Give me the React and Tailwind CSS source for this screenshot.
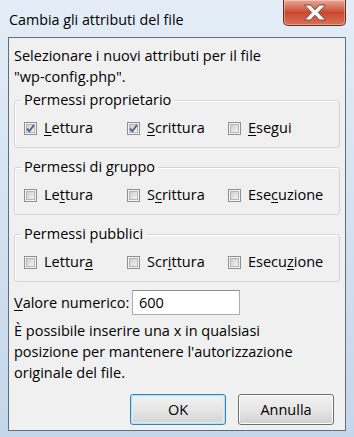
const F = { fontFamily: '"Open Sans", "Noto Sans", sans-serif' };

function Box({ checked }) {
  return (
    <svg width="13" height="13" viewBox="0 0 13 13" className="shrink-0">
      <defs>
        <linearGradient id="cbg" x1="0" y1="0" x2="1" y2="1">
          <stop offset="0" stopColor="#cbcbcb" />
          <stop offset="1" stopColor="#f7f7f7" />
        </linearGradient>
      </defs>
      <rect x="0.5" y="0.5" width="12" height="12" fill="#f4f4f4" stroke="#8f8f8f" />
      <rect x="2.5" y="2.5" width="8" height="8" fill="url(#cbg)" stroke="#b4b4b4" />
      {checked && (
        <path d="M3 6.5 L5.3 9.2 L10 3" fill="none" stroke="#4a5f97" strokeWidth="1.9" strokeLinejoin="round" />
      )}
    </svg>
  );
}

function Check({ checked, pre, u, post, w }) {
  return (
    <div className={`flex items-center gap-[7px] ${w}`}>
      <Box checked={checked} />
      <span>
        {pre}
        <span className="underline underline-offset-2">{u}</span>
        {post}
      </span>
    </div>
  );
}

function Group({ title, items, className }) {
  return (
    <fieldset className={`mx-[5px] border border-[#d5d5d5] rounded-[3px] pl-[6px] pb-[7px] shadow-[inset_1px_1px_0_#fff] ${className}`}>
      <legend className="px-[3px] leading-[20px]">{title}</legend>
      <div className="flex pl-[3px] h-[24px] mt-[6px] items-center">
        {items.map((it, i) => (
          <Check key={i} {...it} w={i === 0 ? "w-[103px]" : "w-[101px]"} />
        ))}
      </div>
    </fieldset>
  );
}

export default function App() {
  return (
    <div
      className="w-[354px] h-[437px] bg-gradient-to-b from-[#e4edf7] via-[#d3e1f0] to-[#c4d6ea] text-[14.5px] text-black flex flex-col"
      style={F}
    >
      <div className="h-[37px] flex justify-between items-start">
        <div className="pl-[9px] pt-[9px] text-[14.3px] leading-[22px]">Cambia gli attributi del file</div>
        <div className="mr-[8px] w-[63px] h-[26px] rounded-b-[5px] border border-t-0 border-[#6b2a1e] bg-gradient-to-b from-[#eaa897] via-[#c9472d] to-[#d77258] flex items-center justify-center shadow-[inset_0_0_0_1px_rgba(255,255,255,0.35)]">
          <svg width="24" height="17" viewBox="0 0 24 17">
            <path d="M1.5 1 H7.5 L12 5.8 L16.5 1 H22.5 L15.3 8.5 L22.5 16 H16.5 L12 11.2 L7.5 16 H1.5 L8.7 8.5 Z" fill="#fff" stroke="#6e4a44" strokeWidth="1" strokeLinejoin="round" />
          </svg>
        </div>
      </div>
      <div className="mx-[8px] h-[394px] border border-[#5e6f80] bg-[#f0f0f0] flex flex-col">
        <div className="px-[5px] pt-[7px] leading-[21px]">
          Selezionare i nuovi attributi per il file
          <br />
          "wp-config.php".
        </div>
        <Group
          className="mt-[3px]"
          title="Permessi proprietario"
          items={[
            { checked: true, pre: "", u: "L", post: "ettura" },
            { checked: true, pre: "", u: "S", post: "crittura" },
            { checked: false, pre: "", u: "E", post: "segui" },
          ]}
        />
        <Group
          className="mt-[9px]"
          title="Permessi di gruppo"
          items={[
            { pre: "Le", u: "t", post: "tura" },
            { pre: "S", u: "c", post: "rittura" },
            { pre: "Ese", u: "c", post: "uzione" },
          ]}
        />
        <Group
          className="mt-[9px]"
          title="Permessi pubblici"
          items={[
            { pre: "Lettur", u: "a", post: "" },
            { pre: "Scr", u: "i", post: "ttura" },
            { pre: "Esecu", u: "z", post: "ione" },
          ]}
        />
        <div className="flex items-center mt-[8px] pl-[5px]">
          <span className="w-[118px]">
            <span className="underline underline-offset-2">V</span>alore numerico:
          </span>
          <div className="w-[108px] h-[25px] bg-white border border-[#abadb3] border-t-[#8e8f8f] pl-[6px] flex items-center">600</div>
        </div>
        <div className="px-[5px] pt-[5px] leading-[21px]">
          È possibile inserire una x in qualsiasi
          <br />
          posizione per mantenere l'autorizzazione
          <br />
          originale del file.
        </div>
        <div className="flex justify-end gap-[12px] pr-[11px] mt-[11px]">
          <button className="w-[96px] h-[31px] rounded-[3px] border border-[#3c7fb1] bg-gradient-to-b from-[#f2f2f2] via-[#e6e6e6] to-[#d3d3d3] shadow-[inset_0_0_0_1px_#aee4f7,inset_0_0_0_2px_#d9f1fa]">OK</button>
          <button className="w-[96px] h-[31px] rounded-[3px] border border-[#707070] bg-gradient-to-b from-[#f2f2f2] via-[#e6e6e6] to-[#d0d0d0] shadow-[inset_0_0_0_1px_#fcfcfc]">Annulla</button>
        </div>
      </div>
    </div>
  );
}
